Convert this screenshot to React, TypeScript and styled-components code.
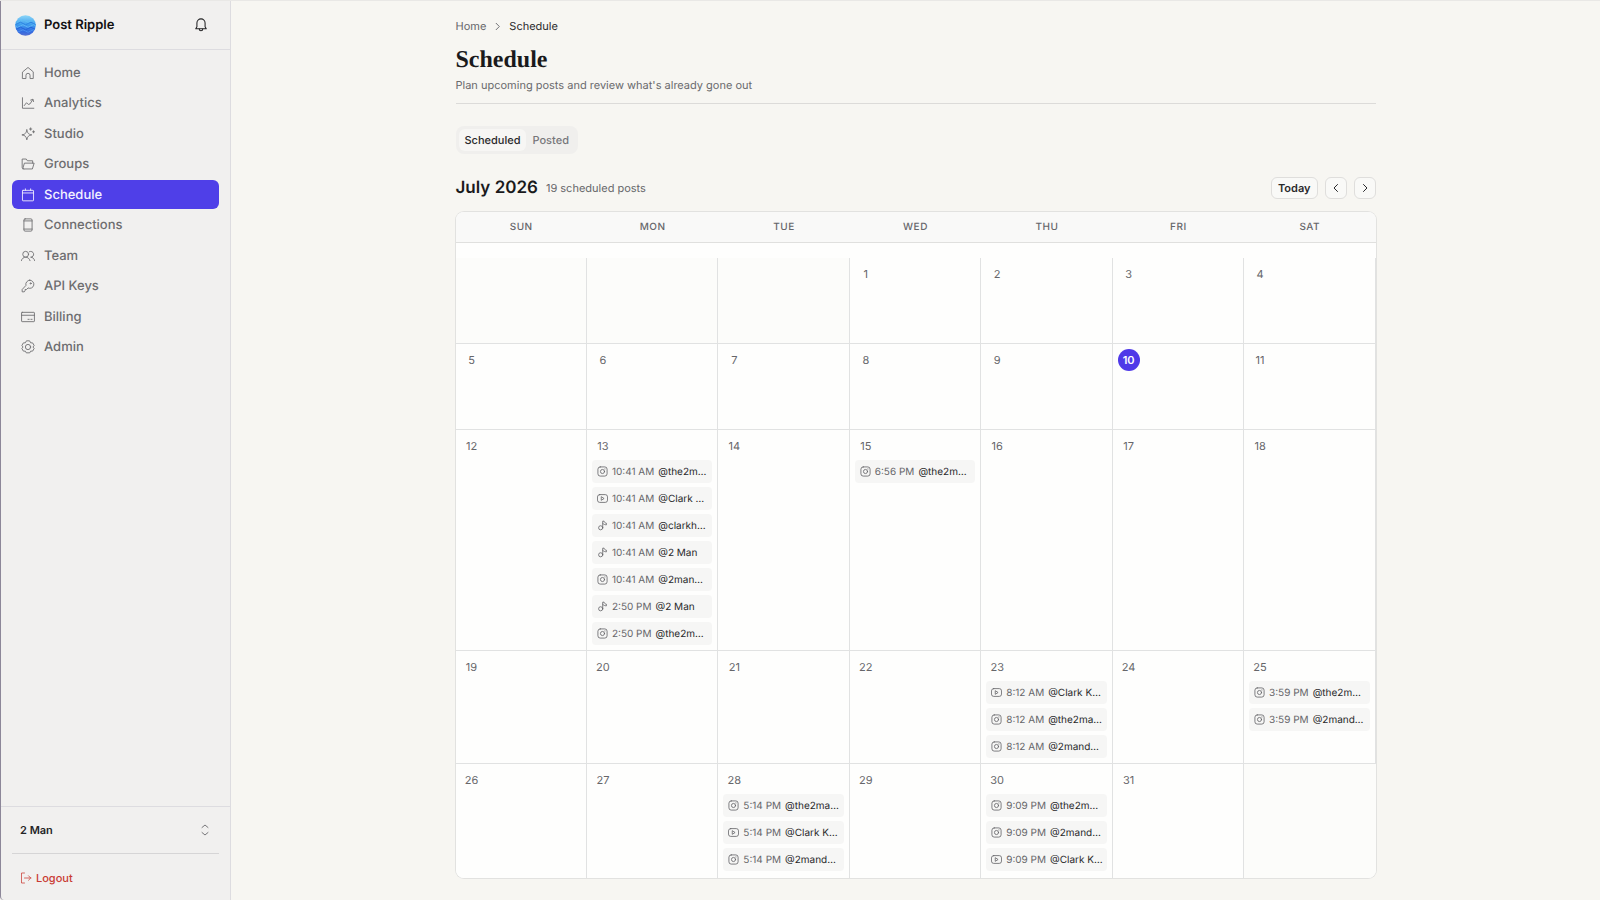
import React from "react";
import styled, { createGlobalStyle, css } from "styled-components";

const GlobalStyle = createGlobalStyle`
  *, *::before, *::after { box-sizing: border-box; }
  body { margin: 0; background: #f7f6f2; color: #1c1c1e; font-family: Inter, "Liberation Sans", sans-serif; font-size: 11px; line-height: 16px; text-rendering: geometricPrecision; -webkit-font-smoothing: antialiased; }
  button, select { font: inherit; color: inherit; margin: 0; text-rendering: inherit; }
  a { color: inherit; text-decoration: none; }
  h1, h2, p, ul, ol { margin: 0; padding: 0; }
  ul, ol { list-style: none; }
`;

const Shell = styled.div`
  display: flex;
  min-height: 100vh;
  border-top: 1px solid #e9e8e6;
`;

const Sidebar = styled.aside`
  position: sticky;
  top: 0;
  display: flex;
  flex-direction: column;
  flex: none;
  width: 231px;
  height: calc(100vh - 1px);
  background: #f1f0ef;
  border-left: 1px solid #8d8799;
  border-right: 1px solid #dddce0;
  border-bottom-left-radius: 4px;
`;

const SidebarHeader = styled.header`
  display: flex;
  align-items: center;
  height: 49px;
  padding: 0 20px 0 14px;
  border-bottom: 1px solid #dddce0;
`;

const Brand = styled.a`
  display: flex;
  flex: 1;
  align-items: center;
  gap: 8px;
  color: #111113;
  font-size: 13px;
  font-weight: 600;
`;

const GhostButton = styled.button`
  display: grid;
  place-items: center;
  padding: 2px;
  border: 0;
  background: none;
  color: #222224;
`;

const Nav = styled.nav`
  flex: 1;
  padding: 8px 11px;
`;

const NavList = styled.ul`
  display: grid;
  align-content: space-between;
  height: 304px;
`;

const NavLink = styled.a<{ $active?: boolean }>`
  display: flex;
  align-items: center;
  gap: 9px;
  height: 29px;
  padding: 0 9px;
  border-radius: 6px;
  font-size: 13px;
  font-weight: 500;
  color: #6d6d6f;
  ${(p) => p.$active && css`
    background: #4f3fe8;
    color: #f3f1ff;
  `}
`;

const SidebarFooter = styled.footer`
  padding: 0 11px 3px;
  border-top: 1px solid #dddce0;
`;

const TeamButton = styled.button`
  display: flex;
  align-items: center;
  justify-content: space-between;
  width: 100%;
  height: 47px;
  padding: 0 8px;
  border: 0;
  border-bottom: 1px solid #d6d5d6;
  background: none;
  color: #242426;
  font-weight: 600;
  svg { color: #77777a; }
`;

const LogoutButton = styled.button`
  display: flex;
  align-items: center;
  gap: 4px;
  height: 39px;
  margin-top: 4px;
  padding: 0 8px;
  border: 0;
  background: none;
  color: #c93a32;
  font-weight: 500;
`;

const Main = styled.main`
  flex: 1;
  min-width: 0;
  padding: 17px 24px 20px;
`;

const Content = styled.div`
  max-width: 920px;
  margin: 0 auto;
`;

const Crumbs = styled.ol`
  display: flex;
  align-items: center;
  gap: 6px;
  color: #66666a;
  svg { display: block; }
`;

const CurrentCrumb = styled.span`
  color: #29292b;
`;

const PageHeader = styled.header`
  padding: 10px 0 10px;
  border-bottom: 1px solid #dcdbd9;
`;

const Title = styled.h1`
  color: #1a1a1c;
  font-family: "Liberation Serif", serif;
  font-size: 24px;
  line-height: 33px;
  font-weight: 700;
`;

const Subtitle = styled.p`
  color: #6a6a6d;
`;

const Tabs = styled.div`
  display: flex;
  width: fit-content;
  margin-top: 22px;
  padding: 3px;
  border-radius: 8px;
  background: #f0efed;
`;

const Tab = styled.button<{ $active?: boolean }>`
  height: 22px;
  padding: 0 6px;
  border: 0;
  border-radius: 6px;
  background: ${(p) => (p.$active ? "#f7f6f4" : "none")};
  color: ${(p) => (p.$active ? "#29292b" : "#76767a")};
  font-weight: 500;
`;

const MonthBar = styled.div`
  display: flex;
  align-items: center;
  gap: 7px;
  height: 22px;
  margin: 23px 0 13px;
`;

const Month = styled.h2`
  color: #1a1a1c;
  font-size: 17px;
  line-height: 22px;
  font-weight: 600;
  margin-right: 1px;
`;

const Count = styled.p`
  flex: 1;
  color: #66666a;
`;

const OutlineButton = styled.button<{ $square?: boolean }>`
  display: grid;
  place-items: center;
  width: ${(p) => (p.$square ? "22px" : "auto")};
  height: 22px;
  padding: ${(p) => (p.$square ? "0" : "0 6px")};
  border: 1px solid #dfdedc;
  border-radius: 6px;
  background: #f9f9f7;
  color: #29292b;
  font-weight: 600;
`;

const Calendar = styled.table`
  display: block;
  overflow: hidden;
  border-radius: 8px;
  background: #fefefd;
  box-shadow: 0 0 0 1px #e2e2e0;
`;

const CalendarHead = styled.thead`
  display: block;
  background: #f9f9f8;
  border-bottom: 1px solid #e0e0de;
`;

const CalendarBody = styled.tbody`
  display: block;
  padding-top: 15px;
`;

const Week = styled.tr`
  display: grid;
  grid-template-columns: repeat(7, minmax(0, 1fr));
`;

const Weekday = styled.th`
  padding: 7px 0;
  color: #66666a;
  font-size: 10px;
  font-weight: 500;
  letter-spacing: 0.5px;
  text-align: center;
`;

const Day = styled.td<{ $outside?: boolean }>`
  min-height: 86px;
  padding: 5px;
  border-right: 1px solid #e1e2e2;
  border-bottom: 1px solid #e1e2e2;
  background: ${(p) => (p.$outside ? "#fcfcfa" : "#fefefd")};
  ${Week}:last-child > & { min-height: 114px; border-bottom: 0; }
  ${Week}:last-child > &:last-child { border-right: 0; }
`;

const DayNumber = styled.time<{ $today?: boolean }>`
  display: grid;
  place-items: center;
  width: 22px;
  height: 22px;
  border-radius: 50%;
  color: ${(p) => (p.$today ? "#ffffff" : "#66666a")};
  background: ${(p) => (p.$today ? "#4f39e8" : "none")};
  font-weight: ${(p) => (p.$today ? 600 : 400)};
`;

const PostList = styled.ul`
  display: grid;
  grid-template-columns: minmax(0, 1fr);
  gap: 4px;
  margin-top: 3px;
`;

const Post = styled.button`
  display: flex;
  align-items: center;
  gap: 4px;
  width: 100%;
  height: 23px;
  padding: 0 5px;
  border: 0;
  border-radius: 4px;
  background: #f6f6f5;
  font-size: 10px;
  text-align: left;
  white-space: nowrap;
  svg { flex: none; color: #66666a; }
`;

const PostTime = styled.span`
  flex: none;
  color: #66666a;
`;

const Handle = styled.span`
  color: #29292b;
`;

const icons = {
  home: <><path d="M3 10 12 2.500l9 7.500V21.500h-5.500V16a3.500 3.500 0 0 0-7 0v5.500H3z" /></>,
  analytics: <><path d="M2.500 3v18H22" /><path d="m5.500 16.500 4-5 3 3 3-1 4.500-7" /><path d="m16.500 7 4-1.500 1 4" /></>,
  studio: <><path d="M10 5c1.200 6 2.800 7.500 8.500 8.500C12.800 14.500 11.200 16 10 22 8.800 16 7.200 14.500 1.500 13.500 7.200 12.500 8.800 11 10 5z" /><path d="M16.500 1.500v4M14.500 3.500h4M21.500 6.500v3.500M19.800 8.200h3.500" /></>,
  groups: <><path d="M4.500 20.500 2 18V3.500h7l2 3h9v4" /><path d="M3.500 20.500h16L22.500 10.500H6.500z" /></>,
  schedule: <><rect x="2.500" y="4" width="19" height="18" rx="1" /><path d="M2.500 8.500h19M7.500 1.500V4M16.500 1.500V4" /></>,
  connections: <><rect x="5" y="1.500" width="14" height="21" rx="2" /><path d="M5 5h14M5 19h14" /></>,
  team: <><circle cx="8" cy="9" r="5" /><path d="M.500 20c1-3.500 4-6 7.500-6s6.500 2.500 7.500 6" /><path d="M14.500 4.500a5 5 0 1 1 2 9.500c3.500 0 6 2.500 7 6" /></>,
  key: <><path d="M15 2a7 7 0 1 1-3 13.300L9.500 18H7v2.500L5.500 22H2v-4l6.500-7A7 7 0 0 1 15 2z" /><circle cx="16.500" cy="7.500" r="1" /></>,
  billing: <><rect x="1" y="4" width="22" height="16" rx="1" /><path d="M1 9h22M12 16h2M17 16h2" /></>,
  admin: <><path d="M9 2 7.500 4.800 4 5 1.500 9.500 3.500 12l-2 2.500L4 19l3.500.200L9 22h6l1.500-2.800L20 19l2.500-4.500-2-2.500 2-2.500L20 5l-3.500-.200L15 2z" /><circle cx="12" cy="12" r="4.500" /></>,
  bell: <><path d="M3 18.500 5 15V8.500a7 7 0 0 1 14 0V15l2 3.500z" /><path d="M9 19a3 3 0 0 0 6 0" /></>,
  left: <path d="m15 5-7 7 7 7" />,
  right: <path d="m9 5 7 7-7 7" />,
  upDown: <path d="m6 7 6-5 6 5M6 17l6 5 6-5" />,
  logout: <><path d="M9 2H3v20h6" /><path d="M9 12h13M17 7.500l4.500 4.500-4.500 4.500" /></>,
  instagram: <><rect x="2" y="2" width="20" height="20" rx="5" /><circle cx="12" cy="12" r="4.500" /><path d="M17 6.500h.500" /></>,
  youtube: <><rect x="1" y="3.500" width="22" height="17" rx="5" /><path d="m10 8.500 5.500 3.500-5.500 3.500z" /></>,
  tiktok: <><path d="M12.500 17V2.500h3c.500 2.500 2 4 5 4.500v3.500c-3.500 0-5.500-1-8-3" /><circle cx="8" cy="17" r="4.500" /></>,
};

type IconName = keyof typeof icons;

function Icon({ name, size, weight = 1.5 }: { name: IconName; size: number; weight?: number }) {
  return (
    <svg width={size} height={size} viewBox="0 0 24 24" fill="none" stroke="currentColor" strokeWidth={weight} strokeLinecap="round" strokeLinejoin="round" aria-hidden="true">
      {icons[name]}
    </svg>
  );
}

function Logo() {
  return (
    <svg width="21" height="21" viewBox="0 0 42 42" aria-hidden="true">
      <defs>
        <clipPath id="disc"><circle cx="21" cy="21" r="20.500" /></clipPath>
        <linearGradient id="water" x1="0" y1="0" x2="0" y2="1">
          <stop offset="0" stopColor="#8fd8f8" />
          <stop offset="0.450" stopColor="#3f9fee" />
          <stop offset="0.800" stopColor="#3269e0" />
          <stop offset="1" stopColor="#5b72d0" />
        </linearGradient>
      </defs>
      <g clipPath="url(#disc)">
        <rect width="42" height="42" fill="url(#water)" />
        <g fill="none" strokeWidth="2">
          <path stroke="#5fbdf4" d="M0 12q5 5 10.500 0t10.500 0 10.500 0 10.500 0" />
          <path stroke="#2f83e2" d="M-5 17q5 5 10.500 0t10.500 0 10.500 0 10.500 0 10.500 0" />
          <path stroke="#5fb4f5" d="M0 22q5 5 10.500 0t10.500 0 10.500 0 10.500 0" />
          <path stroke="#2563d8" d="M-5 27q5 5 10.500 0t10.500 0 10.500 0 10.500 0 10.500 0" />
          <path stroke="#4b8fee" d="M0 32q5 5 10.500 0t10.500 0 10.500 0 10.500 0" />
        </g>
      </g>
    </svg>
  );
}

const navItems: [string, IconName][] = [
  ["Home", "home"], ["Analytics", "analytics"], ["Studio", "studio"], ["Groups", "groups"], ["Schedule", "schedule"],
  ["Connections", "connections"], ["Team", "team"], ["API Keys", "key"], ["Billing", "billing"], ["Admin", "admin"],
];

const weekdays = ["SUN", "MON", "TUE", "WED", "THU", "FRI", "SAT"];
const weeks = [0, 1, 2, 3, 4].map((w) => weekdays.map((_, d) => w * 7 + d - 2));

const posts: Record<number, [IconName, string, string][]> = {
  13: [
    ["instagram", "10:41 AM", "@the2m…"],
    ["youtube", "10:41 AM", "@Clark …"],
    ["tiktok", "10:41 AM", "@clarkh…"],
    ["tiktok", "10:41 AM", "@2 Man"],
    ["instagram", "10:41 AM", "@2man…"],
    ["tiktok", "2:50 PM", "@2 Man"],
    ["instagram", "2:50 PM", "@the2m…"],
  ],
  15: [["instagram", "6:56 PM", "@the2m…"]],
  23: [["youtube", "8:12 AM", "@Clark K…"], ["instagram", "8:12 AM", "@the2ma…"], ["instagram", "8:12 AM", "@2mand…"]],
  25: [["instagram", "3:59 PM", "@the2m…"], ["instagram", "3:59 PM", "@2mand…"]],
  28: [["instagram", "5:14 PM", "@the2ma…"], ["youtube", "5:14 PM", "@Clark K…"], ["instagram", "5:14 PM", "@2mand…"]],
  30: [["instagram", "9:09 PM", "@the2m…"], ["instagram", "9:09 PM", "@2mand…"], ["youtube", "9:09 PM", "@Clark K…"]],
};

export default function App() {
  return (
    <>
      <GlobalStyle />
      <Shell>
        <Sidebar>
          <SidebarHeader>
            <Brand href="#"><Logo />Post Ripple</Brand>
            <GhostButton aria-label="Notifications"><Icon name="bell" size={14} weight={1.8} /></GhostButton>
          </SidebarHeader>
          <Nav aria-label="Primary">
            <NavList>
              {navItems.map(([label, icon]) => (
                <li key={label}>
                  <NavLink href="#" $active={label === "Schedule"} aria-current={label === "Schedule" ? "page" : undefined}>
                    <Icon name={icon} size={14} />{label}
                  </NavLink>
                </li>
              ))}
            </NavList>
          </Nav>
          <SidebarFooter>
            <TeamButton>2 Man<Icon name="upDown" size={12} weight={2} /></TeamButton>
            <LogoutButton><Icon name="logout" size={12} />Logout</LogoutButton>
          </SidebarFooter>
        </Sidebar>
        <Main>
          <Content>
            <nav aria-label="Breadcrumb">
              <Crumbs>
                <li><a href="#">Home</a></li>
                <li><Icon name="right" size={11} weight={2} /></li>
                <li><CurrentCrumb aria-current="page">Schedule</CurrentCrumb></li>
              </Crumbs>
            </nav>
            <PageHeader>
              <Title>Schedule</Title>
              <Subtitle>Plan upcoming posts and review what's already gone out</Subtitle>
            </PageHeader>
            <Tabs role="tablist">
              <Tab role="tab" aria-selected="true" $active>Scheduled</Tab>
              <Tab role="tab" aria-selected="false">Posted</Tab>
            </Tabs>
            <MonthBar>
              <Month>July 2026</Month>
              <Count>19 scheduled posts</Count>
              <OutlineButton>Today</OutlineButton>
              <OutlineButton $square aria-label="Previous month"><Icon name="left" size={12} weight={2} /></OutlineButton>
              <OutlineButton $square aria-label="Next month"><Icon name="right" size={12} weight={2} /></OutlineButton>
            </MonthBar>
            <Calendar>
              <CalendarHead>
                <Week>{weekdays.map((d) => <Weekday key={d} scope="col">{d}</Weekday>)}</Week>
              </CalendarHead>
              <CalendarBody>
                {weeks.map((week) => (
                  <Week key={week[0]}>
                    {week.map((n) => n < 1 || n > 31 ? <Day key={n} $outside /> : (
                      <Day key={n}>
                        <DayNumber $today={n === 10}>{n}</DayNumber>
                        {posts[n] && (
                          <PostList>
                            {posts[n].map(([icon, time, handle], i) => (
                              <li key={i}><Post><Icon name={icon} size={11} weight={1.8} /><PostTime>{time}</PostTime><Handle>{handle}</Handle></Post></li>
                            ))}
                          </PostList>
                        )}
                      </Day>
                    ))}
                  </Week>
                ))}
              </CalendarBody>
            </Calendar>
          </Content>
        </Main>
      </Shell>
    </>
  );
}
